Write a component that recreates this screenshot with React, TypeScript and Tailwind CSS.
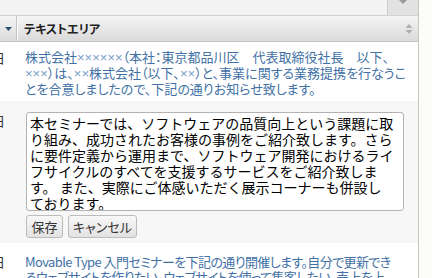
const ja = "font-['Noto_Sans_CJK_JP',sans-serif]";
const palt = "[font-feature-settings:'palt']";

function X({ n }: { n: number }) {
  return <span className="font-['Liberation_Sans',sans-serif] text-[#7a9ec6]">{'×'.repeat(n)}</span>;
}

function DateCell({ top }: { top: string }) {
  return (
    <div className={`w-[17px] shrink-0 overflow-hidden ${top}`}>
      <div className="ml-[-8px] text-[13px] leading-[15px] text-[#333]">日</div>
    </div>
  );
}

const memo = [
  '本セミナーでは、ソフトウェアの品質向上という課題に取',
  'り組み、成功されたお客様の事例をご紹介致します。さら',
  'に要件定義から運用まで、ソフトウェア開発におけるライ',
  'フサイクルのすべてを支援するサービスをご紹介致しま',
  'す。 また、実際にご体感いただく展示コーナーも併設し',
  'ております。',
].join('\n');

export default function App() {
  return (
    <div className={`w-[432px] h-[278px] overflow-hidden flex bg-[#fcfcf8] ${ja}`}>
      <div className="w-[419px] shrink-0 border-r border-[#c6c6c6] flex flex-col">
        {/* toolbar strip */}
        <div className="h-[16px] flex bg-[#f3f3f3] border-b border-[#d2d2d2]">
          <div className="flex-1" />
          <div className="w-[31px] bg-[#e2e2e2] border-l border-[#cdcdcd] flex justify-center">
            <svg width="8" height="4" viewBox="0 0 8 4"><path d="M0 0h8L4 4z" fill="#9a9a9a" /></svg>
          </div>
        </div>

        {/* column header */}
        <div className="h-[26px] flex bg-gradient-to-b from-[#f5f5f5] to-[#dadada] border-b border-[#c4c4c4]">
          <div className="w-[17px] shrink-0 border-r border-[#c3c3c3] flex items-center justify-center">
            <svg width="7" height="4" viewBox="0 0 7 4"><path d="M0 0h7L3.5 4z" fill="#2f4f7a" /></svg>
          </div>
          <div className="flex-1 flex items-center pl-[6px] pr-[5px] border-l border-[#fafafa]">
            <span className={`flex-1 text-[12px] font-bold text-[#222] ${palt}`}>テキストエリア</span>
            <svg width="8" height="10" viewBox="0 0 8 10">
              <path d="M4 0L7.5 4h-7z" fill="#b0b0b0" />
              <path d="M4 10L7.5 6h-7z" fill="#b0b0b0" />
            </svg>
          </div>
        </div>

        {/* row 1 */}
        <div className="flex bg-white h-[59px]">
          <DateCell top="pt-[8px]" />
          <div className={`flex-1 min-w-0 overflow-hidden pl-[8px] pt-[7px] text-[13px] leading-[15px] text-[#4271a6] whitespace-nowrap ${palt}`}>
            株式会社<X n={6} />（本社：東京都品川区　代表取締役社長　以下、<br />
            <X n={3} />）は、<X n={2} />株式会社（以下、<X n={2} />）と、事業に関する業務提携を行なうこ<br />
            とを合意しましたので、下記の通りお知らせ致します。
          </div>
        </div>

        {/* row 2 – editing */}
        <div className="flex bg-[#f7f7f7] h-[142px]">
          <DateCell top="pt-[12px]" />
          <div className="flex-1 pl-[9px] pt-[11px]">
            <textarea
              readOnly
              value={memo}
              className={`block w-[378px] h-[99px] resize-none overflow-hidden bg-white border border-[#b3b3b3] rounded-[3px] px-[3px] pt-[2px] text-[14px] leading-[16px] text-black whitespace-pre ${ja}`}
            />
            <div className="flex gap-[5px] mt-[4px]">
              <button className={`w-[37px] h-[23px] border border-[#bcbcbc] rounded-[3px] bg-gradient-to-b from-[#f8f8f8] to-[#e2e2e2] text-[13px] text-[#333] ${palt}`}>保存</button>
              <button className={`w-[69px] h-[23px] border border-[#bcbcbc] rounded-[3px] bg-gradient-to-b from-[#f8f8f8] to-[#e2e2e2] text-[13px] text-[#333] ${palt}`}>キャンセル</button>
            </div>
          </div>
        </div>

        {/* row 3 */}
        <div className="flex bg-white flex-1 min-h-0">
          <DateCell top="pt-[11px]" />
          <div className={`flex-1 min-w-0 overflow-hidden pl-[8px] pt-[11px] text-[13px] leading-[15px] tracking-[-0.6px] text-[#4271a6] whitespace-nowrap ${palt}`}>
            Movable Type 入門セミナーを下記の通り開催します。自分で更新でき<br />
            るウェブサイトを作りたい、ウェブサイトを使って集客したい、売上を上
          </div>
        </div>
      </div>
    </div>
  );
}
